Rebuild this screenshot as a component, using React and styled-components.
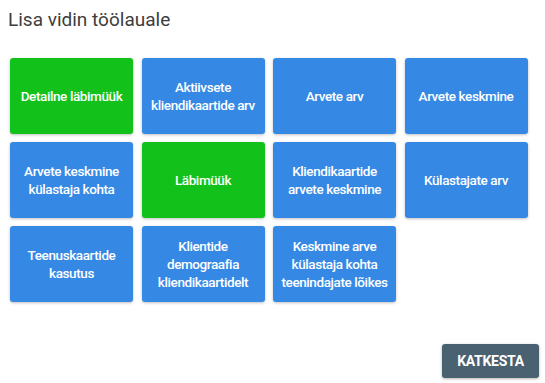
import styled, { createGlobalStyle } from "styled-components"

const GlobalStyle = createGlobalStyle`
  body {
    margin: 0;
    background: #ffffff;
    font-family: Roboto, "Liberation Sans", sans-serif;
  }
`

const widgets = [
  { label: "Detailne läbimüük", active: true },
  { label: "Aktiivsete kliendikaartide arv" },
  { label: "Arvete arv" },
  { label: "Arvete keskmine" },
  { label: "Arvete keskmine külastaja kohta" },
  { label: "Läbimüük", active: true },
  { label: "Kliendikaartide arvete keskmine" },
  { label: "Külastajate arv" },
  { label: "Teenuskaartide kasutus" },
  { label: "Klientide demograafia kliendikaartidelt" },
  { label: "Keskmine arve külastaja kohta teenindajate lõikes" },
]

function App() {
  return (
    <>
      <GlobalStyle />
      <Dialog>
        <Title>Lisa vidin töölauale</Title>
        <Grid>
          {widgets.map((w) => (
            <Tile key={w.label} active={w.active}>
              {w.label}
            </Tile>
          ))}
        </Grid>
        <Footer>
          <CancelButton>Katkesta</CancelButton>
        </Footer>
      </Dialog>
    </>
  )
}

export default App

const Dialog = styled.div`
  width: 545px;
  height: 383px;
  box-sizing: border-box;
  padding: 6px 6px 5px 10px;
  display: flex;
  flex-direction: column;
`

const Title = styled.h2`
  margin: 0 0 0 -2px;
  font-size: 19px;
  line-height: 28px;
  font-weight: 400;
  color: #3d3d3d;
`

const Grid = styled.div`
  margin-top: 24px;
  display: grid;
  grid-template-columns: repeat(4, 123px);
  grid-auto-rows: 76px;
  column-gap: 8.5px;
  row-gap: 8px;
`

const Tile = styled.div`
  display: flex;
  align-items: center;
  justify-content: center;
  text-align: center;
  padding: 0 4px;
  border-radius: 3px;
  background: ${({ active }) => (active ? "#12c21b" : "#3589e4")};
  color: #ffffff;
  font-size: 13.5px;
  line-height: 18px;
  font-weight: 500;
  letter-spacing: -0.4px;
  box-shadow: 0 1px 3px rgba(0, 0, 0, 0.25);
  cursor: pointer;
`

const Footer = styled.div`
  margin-top: auto;
  display: flex;
  justify-content: flex-end;
`

const CancelButton = styled.button`
  width: 97px;
  height: 34px;
  border: none;
  border-radius: 3px;
  background: #4a6171;
  color: #ffffff;
  font-family: Roboto, "Liberation Sans", sans-serif;
  font-size: 14px;
  font-weight: 700;
  text-transform: uppercase;
  letter-spacing: -0.3px;
  box-shadow: 0 1px 3px rgba(0, 0, 0, 0.3);
  cursor: pointer;
`
